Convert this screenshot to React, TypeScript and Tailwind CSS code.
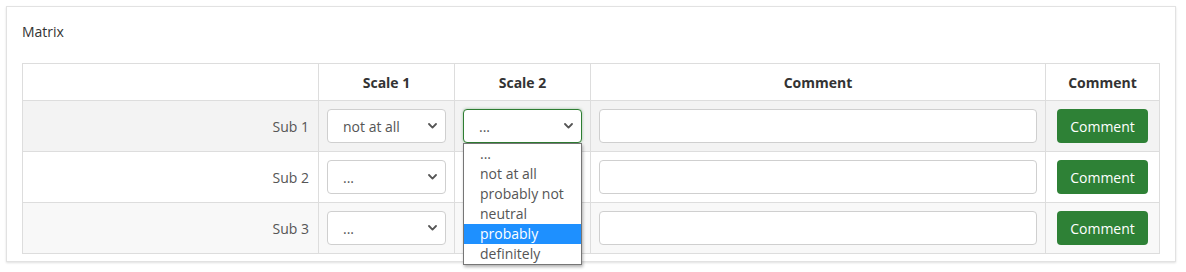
import React from "react";

const Chevron = () => (
  <svg width="9" height="6" viewBox="0 0 9 6" className="shrink-0">
    <path d="M1 1 L4.5 4.6 L8 1" fill="none" stroke="#555" strokeWidth="1.8" strokeLinecap="round" strokeLinejoin="round" />
  </svg>
);

function FakeSelect({ value, focused }: { value: string; focused?: boolean }) {
  return (
    <div
      className={
        focused
          ? "flex h-[34px] w-full items-center justify-between rounded-[4px] border border-[#2e7d32] bg-white pl-[15px] pr-[8px] shadow-[0_0_3px_rgba(46,125,50,0.45)]"
          : "flex h-[34px] w-full items-center justify-between rounded-[4px] border border-[#cfcfcf] bg-white pl-[15px] pr-[8px]"
      }
    >
      <span className="pt-[1px] text-[14px] leading-[20px] text-[#555]">{value}</span>
      <Chevron />
    </div>
  );
}

const options = ["...", "not at all", "probably not", "neutral", "probably", "definitely"];

function Dropdown() {
  return (
    <div className="absolute left-0 top-[34px] z-10 w-[119px] border border-[#767676] bg-white shadow-[1px_2px_3px_rgba(0,0,0,0.3)]">
      {options.map((o) => (
        <div
          key={o}
          className={
            o === "probably"
              ? "h-[20px] bg-[#1e90ff] pl-[16px] text-[14px] leading-[20px] text-white"
              : "h-[20px] pl-[16px] text-[14px] leading-[20px] text-[#555]"
          }
        >
          {o}
        </div>
      ))}
    </div>
  );
}

const rows = [
  { name: "Sub 1", s1: "not at all", s2: "...", bg: "bg-[#f3f3f3]", focused: true },
  { name: "Sub 2", s1: "...", s2: "", bg: "bg-white", focused: false },
  { name: "Sub 3", s1: "...", s2: "", bg: "bg-[#f8f8f8]", focused: false },
];

export default function App() {
  return (
    <div className="min-h-[272px] w-[1186px] bg-white pl-[6px] pt-[6px] font-['Open_Sans',sans-serif]">
      <div className="h-[256px] w-[1170px] border border-[#e2e2e2] bg-white px-[15px] pt-[15px] shadow-[0_1px_2px_rgba(0,0,0,0.12)]">
        <div className="h-[20px] text-[14px] leading-[20px] text-[#333]">Matrix</div>
        <div className="mt-[21px] grid w-[1138px] grid-cols-[295px_136px_136px_455px_114px] border border-[#dddddd] text-[14px] text-[#555]">
          <div className="h-[36px] bg-white" />
          <div className="flex h-[36px] items-center justify-center border-l border-[#dddddd] bg-white font-bold text-[#333]">Scale 1</div>
          <div className="flex h-[36px] items-center justify-center border-l border-[#dddddd] bg-white font-bold text-[#333]">Scale 2</div>
          <div className="flex h-[36px] items-center justify-center border-l border-[#dddddd] bg-white font-bold text-[#333]">Comment</div>
          <div className="flex h-[36px] items-center justify-center border-l border-[#dddddd] bg-white font-bold text-[#333]">Comment</div>
          {rows.map((r) => (
            <React.Fragment key={r.name}>
              <div className={`flex h-[51px] items-center justify-end border-t border-[#dddddd] pr-[9px] ${r.bg}`}>{r.name}</div>
              <div className={`flex h-[51px] items-center border-l border-t border-[#dddddd] px-[8px] ${r.bg}`}>
                <FakeSelect value={r.s1} />
              </div>
              <div className={`flex h-[51px] items-center border-l border-t border-[#dddddd] px-[8px] ${r.bg}`}>
                <div className="relative w-full">
                  <FakeSelect value={r.s2} focused={r.focused} />
                  {r.focused && <Dropdown />}
                </div>
              </div>
              <div className={`flex h-[51px] items-center border-l border-t border-[#dddddd] px-[8px] ${r.bg}`}>
                <div className="h-[34px] w-full rounded-[4px] border border-[#cfcfcf] bg-white" />
              </div>
              <div className={`flex h-[51px] items-center justify-center border-l border-t border-[#dddddd] ${r.bg}`}>
                <div className="flex h-[34px] w-[91px] items-center justify-center rounded-[4px] bg-[#2e8136] text-[14px] text-white">Comment</div>
              </div>
            </React.Fragment>
          ))}
        </div>
      </div>
    </div>
  );
}
